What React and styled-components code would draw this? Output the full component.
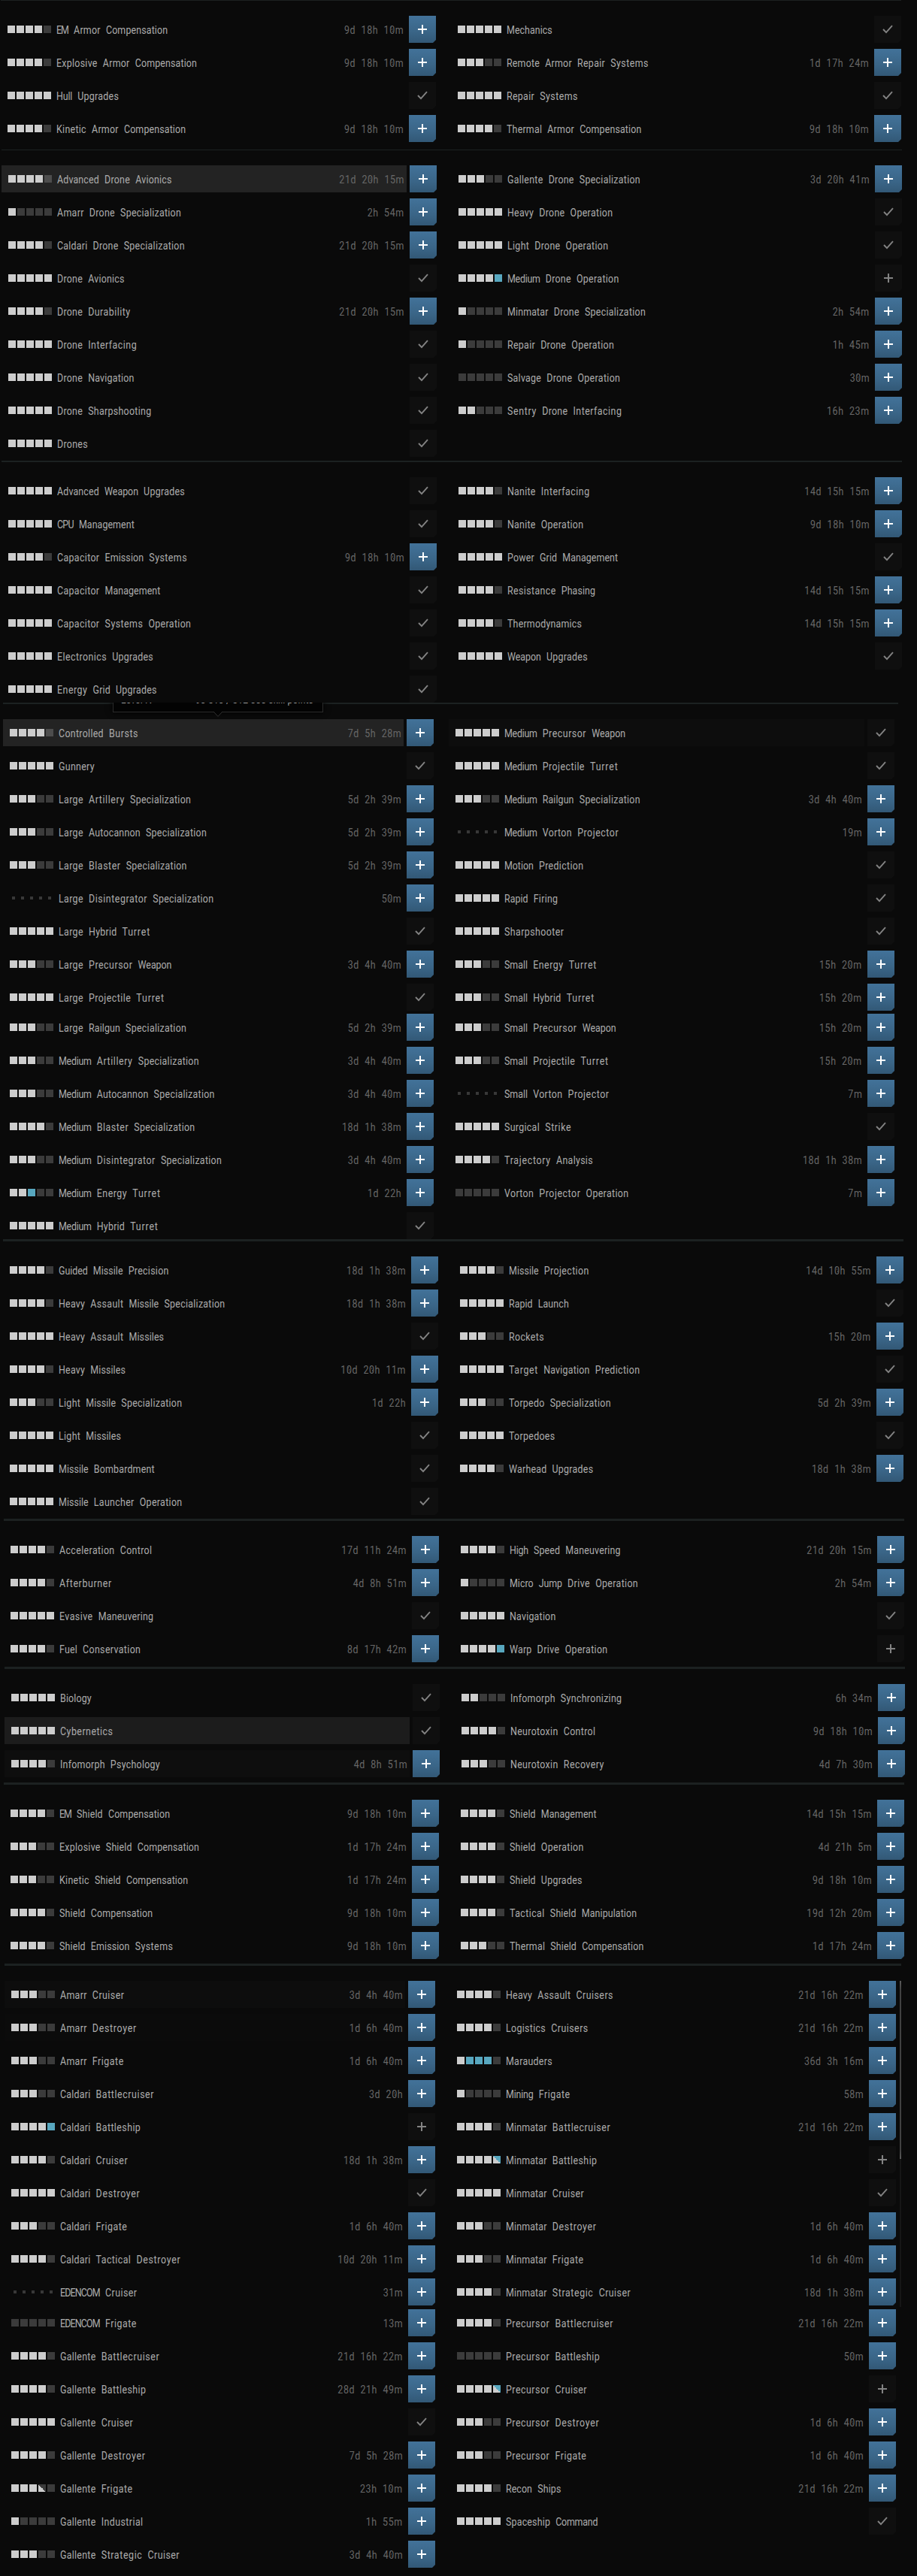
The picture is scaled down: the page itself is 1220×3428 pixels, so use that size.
import React from "react";
import styled, { createGlobalStyle } from "styled-components";

const FONT = 'Roboto, "Liberation Sans", sans-serif';
const FONT_SIZE = 14.6;
const CONDENSE = 0.85;

const GlobalStyle = createGlobalStyle`
  html, body { margin: 0; padding: 0; background: #0a0a0a; }
  * { box-sizing: border-box; }
`;

/* ---------- text metrics ---------- */

const ADVANCE = {
  i: 3.3, l: 3.3, j: 3.6, I: 3.4, m: 10.3, w: 9.2, t: 5.5, r: 5.5, f: 5.5, c: 6.8, s: 6.9,
  v: 6.7, x: 6.6, z: 6.5, k: 6.6, M: 9, W: 9.9, E: 6.9, F: 6.6, L: 6.4, S: 7.1, T: 7,
  A: 7.4, B: 7.2, C: 7.3, D: 7.5, G: 7.4, H: 7.5, J: 6.8, K: 7, N: 7.7, O: 7.5, P: 7.1,
  R: 7.2, U: 7.4, V: 7.2,
};

const ctx = document.createElement("canvas").getContext("2d");

function trackingFor(word) {
  ctx.font = `${FONT_SIZE}px ${FONT}`;
  const natural = ctx.measureText(word).width;
  const target = [...word].reduce((sum, ch) => sum + (ADVANCE[ch] ?? 7), 0);
  return (target / CONDENSE - natural) / word.length;
}

/* ---------- styled parts ---------- */

const Page = styled.main`
  width: 1220px;
  height: 3428px;
  background: #0a0a0a;
  font-family: ${FONT};
  font-size: ${FONT_SIZE}px;
  overflow: hidden;
`;

const Section = styled.section`
  position: relative;
  height: ${(p) => p.$height}px;
  width: ${(p) => p.$width}px;
  margin-left: ${(p) => p.$indent}px;
  padding-top: 20px;
  border-top: ${(p) => p.$line}px solid #1c2121;
  display: flex;
  gap: 20px;
`;

const Clip = styled.div`
  height: ${(p) => p.$height}px;
  overflow: hidden;
`;

const Column = styled.div`
  flex: none;
  display: flex;
  flex-direction: column;
  gap: 8px;
  width: ${(p) => p.$width}px;
`;

const Row = styled.div`
  display: flex;
  gap: 4px;
  height: 36px;
  flex: none;
  margin-top: ${(p) => p.$shift || 0}px;
`;

const Body = styled.div`
  flex: 1;
  display: flex;
  align-items: flex-start;
  padding: 0 4px 0 9px;
  background: ${(p) => p.$tint || "transparent"};
`;

const Levels = styled.div`
  display: flex;
  gap: 2px;
  width: 58px;
  padding-top: 13px;
  flex: none;
`;

const FILLS = {
  f: "#cdcdcd",
  b: "#58a7bf",
  e: "#3b3b3b",
  h: "linear-gradient(to top right, #cdcdcd 50%, #58a7bf 50%)",
  p: "linear-gradient(to top right, #cdcdcd 50%, #3b3b3b 50%)",
};

const Level = styled.i`
  width: 10px;
  height: 10px;
  background: ${(p) => (p.$kind === "e" && p.$lit ? "#4d4d4d" : FILLS[p.$kind])};
`;

const Dot = styled.i`
  width: 4px;
  height: 4px;
  margin: 3px;
  background: #383838;
`;

const Name = styled.span`
  flex: 1;
  margin-left: 7.4px;
  line-height: 36px;
  padding-top: 1px;
  word-spacing: 4.8px;
  white-space: nowrap;
  color: #adadad;
  transform: scaleX(${CONDENSE});
  transform-origin: left;
`;

const Time = styled.span`
  line-height: 36px;
  padding-top: 1px;
  margin-right: -1.1px;
  letter-spacing: 0.7px;
  word-spacing: 4.4px;
  white-space: nowrap;
  color: #686868;
  transform: scaleX(${CONDENSE});
  transform-origin: right;
`;

const Zero = styled.span`
  background: linear-gradient(to top right, transparent 44%, #4c4c4c 47%, #4c4c4c 53%, transparent 56%)
    2.2px 4px / 4px 9px no-repeat;
`;

const Button = styled.button`
  width: 36px;
  height: 36px;
  flex: none;
  padding: 0;
  border: 0;
  display: grid;
  place-items: center;
  color: ${(p) => (p.$active ? "#ffffff" : "#838383")};
  background: ${(p) => (p.$active ? "linear-gradient(#427299, #3a6587 60%, #325876)" : "#0f0f0f")};
  clip-path: polygon(0 0, 100% 0, 100% calc(100% - 4px), calc(100% - 4px) 100%, 0 100%);
`;

const Scrollbar = styled.div`
  position: absolute;
  top: 20px;
  right: 0;
  width: 2px;
  height: 434px;
  background: #161616;
`;

const Thumb = styled.div`
  height: 237px;
  background: linear-gradient(#5a5a5a, #414141 12px, #414141 225px, #5a5a5a);
`;

const TipWindow = styled.div`
  position: absolute;
  top: -2px;
  left: 126px;
  width: 320px;
  height: 24px;
  overflow: hidden;
`;

const Tip = styled.div`
  position: absolute;
  left: 20px;
  bottom: 11px;
  width: 280px;
  height: 40px;
  display: flex;
  justify-content: space-between;
  align-items: flex-end;
  padding: 0 12px 8px 10px;
  border: 1px solid #2b2b2b;
  background: #030303;
  box-shadow: 0 0 8px #000;
  color: #a0a0a0;
  font-size: 12px;
  line-height: 14px;
  letter-spacing: 0.2px;
`;

const TipArrow = styled.svg`
  position: absolute;
  left: 154px;
  top: 12px;
`;

/* ---------- icons ---------- */

const Plus = () => (
  <svg width="12" height="12" viewBox="0 0 12 12" shapeRendering="crispEdges">
    <path d="M5 0h2v5h5v2H7v5H5V7H0V5h5z" fill="currentColor" />
  </svg>
);

const Check = () => (
  <svg width="14" height="12" viewBox="0 0 14 12">
    <path d="M1 6l4 4.2L13 1.2" fill="none" stroke="currentColor" strokeWidth="1.9" />
  </svg>
);

/* ---------- components ---------- */

function Label({ text }) {
  return (
    <Name>
      {text.split(" ").map((word, i) => (
        <React.Fragment key={i}>
          {i > 0 && " "}
          <span style={{ letterSpacing: `${trackingFor(word)}px` }}>{word}</span>
        </React.Fragment>
      ))}
    </Name>
  );
}

function Duration({ value }) {
  return <Time>{[...value].map((ch, i) => (ch === "0" ? <Zero key={i}>0</Zero> : ch))}</Time>;
}

function Skill({ skill, tint, shift }) {
  const [name, levels, time] = skill;
  const done = levels === "fffff";
  const bright = tint === "#232323";
  return (
    <Row $shift={shift}>
      <Body $tint={tint}>
        <Levels>
          {[...levels].map((k, i) => (k === "." ? <Dot key={i} /> : <Level key={i} $kind={k} $lit={bright} />))}
        </Levels>
        <Label text={name} />
        {time && <Duration value={time} />}
      </Body>
      <Button $active={Boolean(time)} aria-label={done ? "Trained" : "Add to queue"}>
        {done ? <Check /> : <Plus />}
      </Button>
    </Row>
  );
}

function SkillColumn({ width, skills, tints = {}, seam = {} }) {
  return (
    <Column $width={width}>
      {skills.map((s, i) => (
        <Skill key={s[0]} skill={s} tint={tints[i]} shift={seam[i]} />
      ))}
    </Column>
  );
}

/* ---------- data ---------- */

const F = "fffff", F4 = "ffffe", F3 = "fffee", F2 = "ffeee", F1 = "feeee", F0 = "eeeee", NONE = ".....";

const GROUPS = [
  {
    indent: 1, line: 1, height: 199, body: 539, width: 1198,
    left: [
      ["EM Armor Compensation", F4, "9d 18h 10m"],
      ["Explosive Armor Compensation", F4, "9d 18h 10m"],
      ["Hull Upgrades", F],
      ["Kinetic Armor Compensation", F4, "9d 18h 10m"],
    ],
    right: [
      ["Mechanics", F],
      ["Remote Armor Repair Systems", F3, "1d 17h 24m"],
      ["Repair Systems", F],
      ["Thermal Armor Compensation", F4, "9d 18h 10m"],
    ],
  },
  {
    indent: 2, line: 1, height: 414, body: 539, width: 1198, leftTints: { 0: "#232323" },
    left: [
      ["Advanced Drone Avionics", F4, "21d 20h 15m"],
      ["Amarr Drone Specialization", F1, "2h 54m"],
      ["Caldari Drone Specialization", F4, "21d 20h 15m"],
      ["Drone Avionics", F],
      ["Drone Durability", F4, "21d 20h 15m"],
      ["Drone Interfacing", F],
      ["Drone Navigation", F],
      ["Drone Sharpshooting", F],
      ["Drones", F],
    ],
    right: [
      ["Gallente Drone Specialization", F3, "3d 20h 41m"],
      ["Heavy Drone Operation", F],
      ["Light Drone Operation", F],
      ["Medium Drone Operation", "ffffb"],
      ["Minmatar Drone Specialization", F1, "2h 54m"],
      ["Repair Drone Operation", F1, "1h 45m"],
      ["Salvage Drone Operation", F0, "30m"],
      ["Sentry Drone Interfacing", F2, "16h 23m"],
    ],
  },
  {
    indent: 2, line: 2, height: 322, body: 539, width: 1198,
    left: [
      ["Advanced Weapon Upgrades", F],
      ["CPU Management", F],
      ["Capacitor Emission Systems", F4, "9d 18h 10m"],
      ["Capacitor Management", F],
      ["Capacitor Systems Operation", F],
      ["Electronics Upgrades", F],
      ["Energy Grid Upgrades", F],
    ],
    right: [
      ["Nanite Interfacing", F4, "14d 15h 15m"],
      ["Nanite Operation", F4, "9d 18h 10m"],
      ["Power Grid Management", F],
      ["Resistance Phasing", F4, "14d 15h 15m"],
      ["Thermodynamics", F4, "14d 15h 15m"],
      ["Weapon Upgrades", F],
    ],
  },
  {
    indent: 4, line: 2, height: 714, body: 533, width: 1191, tip: true,
    leftTints: { 0: "#232323" }, rightTints: { 0: "#0d0d0d" },
    leftSeam: { 9: -4 }, rightSeam: { 9: -4 },
    left: [
      ["Controlled Bursts", F4, "7d 5h 28m"],
      ["Gunnery", F],
      ["Large Artillery Specialization", F3, "5d 2h 39m"],
      ["Large Autocannon Specialization", F3, "5d 2h 39m"],
      ["Large Blaster Specialization", F3, "5d 2h 39m"],
      ["Large Disintegrator Specialization", NONE, "50m"],
      ["Large Hybrid Turret", F],
      ["Large Precursor Weapon", F3, "3d 4h 40m"],
      ["Large Projectile Turret", F],
      ["Large Railgun Specialization", F3, "5d 2h 39m"],
      ["Medium Artillery Specialization", F3, "3d 4h 40m"],
      ["Medium Autocannon Specialization", F3, "3d 4h 40m"],
      ["Medium Blaster Specialization", F4, "18d 1h 38m"],
      ["Medium Disintegrator Specialization", F3, "3d 4h 40m"],
      ["Medium Energy Turret", "ffbee", "1d 22h"],
      ["Medium Hybrid Turret", F],
    ],
    right: [
      ["Medium Precursor Weapon", F],
      ["Medium Projectile Turret", F],
      ["Medium Railgun Specialization", F3, "3d 4h 40m"],
      ["Medium Vorton Projector", NONE, "19m"],
      ["Motion Prediction", F],
      ["Rapid Firing", F],
      ["Sharpshooter", F],
      ["Small Energy Turret", F3, "15h 20m"],
      ["Small Hybrid Turret", F3, "15h 20m"],
      ["Small Precursor Weapon", F3, "15h 20m"],
      ["Small Projectile Turret", F3, "15h 20m"],
      ["Small Vorton Projector", NONE, "7m"],
      ["Surgical Strike", F],
      ["Trajectory Analysis", F4, "18d 1h 38m"],
      ["Vorton Projector Operation", F0, "7m"],
    ],
  },
  {
    indent: 4, line: 3, height: 372, body: 539, width: 1198,
    left: [
      ["Guided Missile Precision", F4, "18d 1h 38m"],
      ["Heavy Assault Missile Specialization", F4, "18d 1h 38m"],
      ["Heavy Assault Missiles", F],
      ["Heavy Missiles", F4, "10d 20h 11m"],
      ["Light Missile Specialization", F3, "1d 22h"],
      ["Light Missiles", F],
      ["Missile Bombardment", F],
      ["Missile Launcher Operation", F],
    ],
    right: [
      ["Missile Projection", F4, "14d 10h 55m"],
      ["Rapid Launch", F],
      ["Rockets", F3, "15h 20m"],
      ["Target Navigation Prediction", F],
      ["Torpedo Specialization", F3, "5d 2h 39m"],
      ["Torpedoes", F],
      ["Warhead Upgrades", F4, "18d 1h 38m"],
    ],
  },
  {
    indent: 5, line: 3, height: 197, body: 539, width: 1198,
    left: [
      ["Acceleration Control", F4, "17d 11h 24m"],
      ["Afterburner", F4, "4d 8h 51m"],
      ["Evasive Maneuvering", F],
      ["Fuel Conservation", F4, "8d 17h 42m"],
    ],
    right: [
      ["High Speed Maneuvering", F4, "21d 20h 15m"],
      ["Micro Jump Drive Operation", F1, "2h 54m"],
      ["Navigation", F],
      ["Warp Drive Operation", "ffffb"],
    ],
  },
  {
    indent: 6, line: 3, height: 154, body: 539, width: 1198,
    leftTints: { 1: "#1c1c1c", 2: "#0e0e0e" },
    left: [
      ["Biology", F],
      ["Cybernetics", F],
      ["Infomorph Psychology", F4, "4d 8h 51m"],
    ],
    right: [
      ["Infomorph Synchronizing", F2, "6h 34m"],
      ["Neurotoxin Control", F4, "9d 18h 10m"],
      ["Neurotoxin Recovery", F3, "4d 7h 30m"],
    ],
  },
  {
    indent: 5, line: 3, height: 241, body: 539, width: 1198,
    left: [
      ["EM Shield Compensation", F4, "9d 18h 10m"],
      ["Explosive Shield Compensation", F3, "1d 17h 24m"],
      ["Kinetic Shield Compensation", F3, "1d 17h 24m"],
      ["Shield Compensation", F4, "9d 18h 10m"],
      ["Shield Emission Systems", F4, "9d 18h 10m"],
    ],
    right: [
      ["Shield Management", F4, "14d 15h 15m"],
      ["Shield Operation", F4, "4d 21h 5m"],
      ["Shield Upgrades", F4, "9d 18h 10m"],
      ["Tactical Shield Manipulation", F4, "19d 12h 20m"],
      ["Thermal Shield Compensation", F3, "1d 17h 24m"],
    ],
  },
  {
    indent: 6, line: 3, height: 815, body: 533, width: 1193, scroll: true,
    leftTints: { 0: "#0d0d0d", 1: "#0b0b0b" },
    leftSeam: { 10: -3 }, rightSeam: { 10: -3 },
    left: [
      ["Amarr Cruiser", F3, "3d 4h 40m"],
      ["Amarr Destroyer", F3, "1d 6h 40m"],
      ["Amarr Frigate", F3, "1d 6h 40m"],
      ["Caldari Battlecruiser", F3, "3d 20h"],
      ["Caldari Battleship", "ffffb"],
      ["Caldari Cruiser", F4, "18d 1h 38m"],
      ["Caldari Destroyer", F],
      ["Caldari Frigate", F3, "1d 6h 40m"],
      ["Caldari Tactical Destroyer", F4, "10d 20h 11m"],
      ["EDENCOM Cruiser", NONE, "31m"],
      ["EDENCOM Frigate", F0, "13m"],
      ["Gallente Battlecruiser", F4, "21d 16h 22m"],
      ["Gallente Battleship", F4, "28d 21h 49m"],
      ["Gallente Cruiser", F],
      ["Gallente Destroyer", F4, "7d 5h 28m"],
      ["Gallente Frigate", "fffpe", "23h 10m"],
      ["Gallente Industrial", F1, "1h 55m"],
      ["Gallente Strategic Cruiser", F3, "3d 4h 40m"],
    ],
    right: [
      ["Heavy Assault Cruisers", F4, "21d 16h 22m"],
      ["Logistics Cruisers", F4, "21d 16h 22m"],
      ["Marauders", "fbbbe", "36d 3h 16m"],
      ["Mining Frigate", F1, "58m"],
      ["Minmatar Battlecruiser", F4, "21d 16h 22m"],
      ["Minmatar Battleship", "ffffh"],
      ["Minmatar Cruiser", F],
      ["Minmatar Destroyer", F3, "1d 6h 40m"],
      ["Minmatar Frigate", F3, "1d 6h 40m"],
      ["Minmatar Strategic Cruiser", F4, "18d 1h 38m"],
      ["Precursor Battlecruiser", F4, "21d 16h 22m"],
      ["Precursor Battleship", F0, "50m"],
      ["Precursor Cruiser", "ffffh"],
      ["Precursor Destroyer", F3, "1d 6h 40m"],
      ["Precursor Frigate", F3, "1d 6h 40m"],
      ["Recon Ships", F4, "21d 16h 22m"],
      ["Spaceship Command", F],
    ],
  },
];

export default function App() {
  return (
    <Page>
      <GlobalStyle />
      {GROUPS.map((g) => (
        <Clip key={g.left[0][0]} $height={g.height}>
          <Section $height={g.height} $width={g.width} $indent={g.indent} $line={g.line}>
            <SkillColumn width={g.body + 40} skills={g.left} tints={g.leftTints} seam={g.leftSeam} />
            <SkillColumn width={g.body + 60} skills={g.right} tints={g.rightTints} seam={g.rightSeam} />
            {g.tip && (
              <TipWindow>
                <Tip>
                  <span>Level IV</span>
                  <span>90 510 / 512 000 skill points</span>
                </Tip>
                <TipArrow width="12" height="7" viewBox="0 0 12 7">
                  <path d="M0 0L6 6.4L12 0" fill="#030303" stroke="#333" strokeWidth="1" />
                </TipArrow>
              </TipWindow>
            )}
            {g.scroll && (
              <Scrollbar>
                <Thumb />
              </Scrollbar>
            )}
          </Section>
        </Clip>
      ))}
    </Page>
  );
}
